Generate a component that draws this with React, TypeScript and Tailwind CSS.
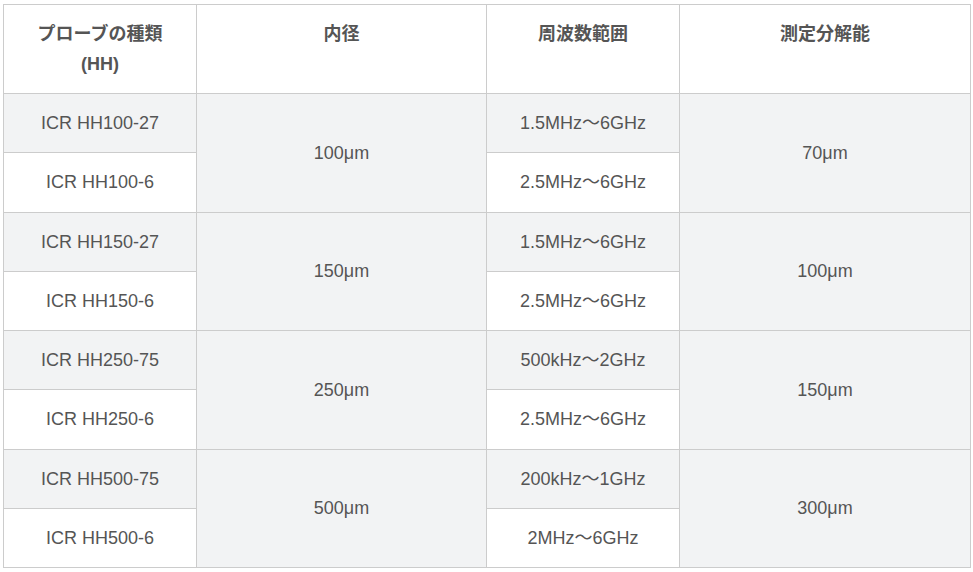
import { Fragment } from "react";

type Pair = {
  probes: [string, string];
  diameter: string;
  ranges: [string, string];
  resolution: string;
};

const rows: Pair[] = [
  { probes: ["ICR HH100-27", "ICR HH100-6"], diameter: "100μm", ranges: ["1.5MHz〜6GHz", "2.5MHz〜6GHz"], resolution: "70μm" },
  { probes: ["ICR HH150-27", "ICR HH150-6"], diameter: "150μm", ranges: ["1.5MHz〜6GHz", "2.5MHz〜6GHz"], resolution: "100μm" },
  { probes: ["ICR HH250-75", "ICR HH250-6"], diameter: "250μm", ranges: ["500kHz〜2GHz", "2.5MHz〜6GHz"], resolution: "150μm" },
  { probes: ["ICR HH500-75", "ICR HH500-6"], diameter: "500μm", ranges: ["200kHz〜1GHz", "2MHz〜6GHz"], resolution: "300μm" },
];

const cell = "border border-[#cccccc] px-4 py-[14px] text-center align-middle";
const head = "border border-[#cccccc] px-4 py-[13.75px] text-center align-top font-bold";
const shaded = "bg-[#f2f3f4]";

export default function App() {
  return (
    <div className="min-h-screen bg-white pl-[3px] pt-[4px] font-['Liberation_Sans','Noto_Sans_CJK_JP',sans-serif] text-[18px] leading-[30.25px] text-[#555555]">
      <table className="w-[967px] table-fixed border-collapse">
        <colgroup>
          <col className="w-[193px]" />
          <col className="w-[290px]" />
          <col className="w-[193px]" />
          <col className="w-[291px]" />
        </colgroup>
        <thead>
          <tr>
            <th className={head}>
              プローブの種類
              <br />
              (HH)
            </th>
            <th className={head}>内径</th>
            <th className={head}>周波数範囲</th>
            <th className={head}>測定分解能</th>
          </tr>
        </thead>
        <tbody>
          {rows.map((row) => (
            <Fragment key={row.probes[0]}>
              <tr>
                <td className={`${cell} ${shaded}`}>{row.probes[0]}</td>
                <td rowSpan={2} className={`${cell} ${shaded}`}>
                  {row.diameter}
                </td>
                <td className={`${cell} ${shaded}`}>{row.ranges[0]}</td>
                <td rowSpan={2} className={`${cell} ${shaded}`}>
                  {row.resolution}
                </td>
              </tr>
              <tr>
                <td className={`${cell} bg-white`}>{row.probes[1]}</td>
                <td className={`${cell} bg-white`}>{row.ranges[1]}</td>
              </tr>
            </Fragment>
          ))}
        </tbody>
      </table>
    </div>
  );
}
